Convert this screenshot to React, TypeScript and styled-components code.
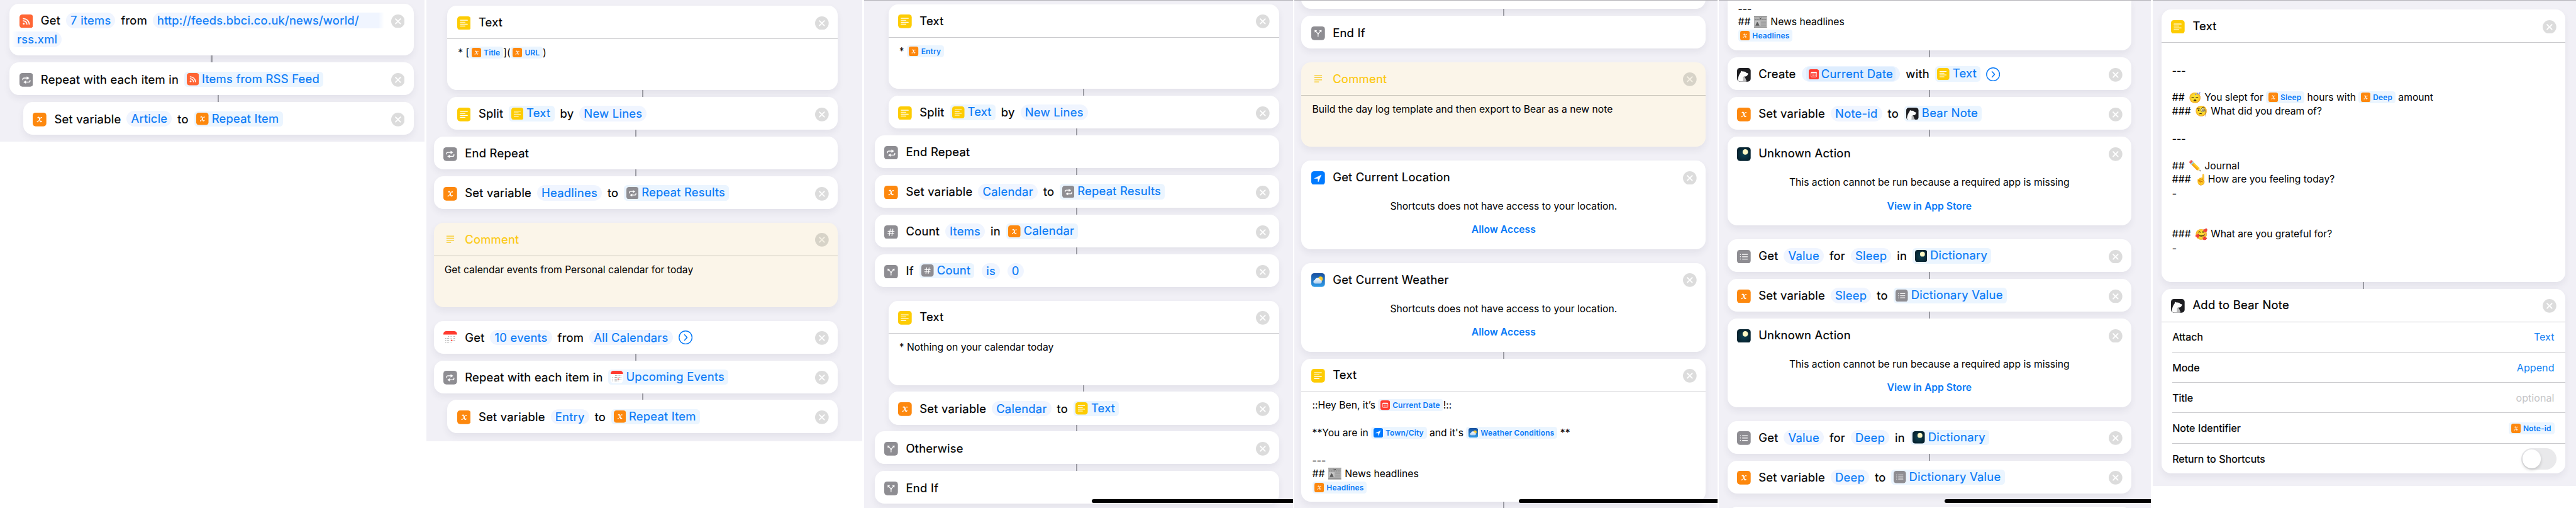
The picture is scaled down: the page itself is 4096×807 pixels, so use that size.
import React from "react";
import styled, { createGlobalStyle, css } from "styled-components";

/* Design units are full-size pixels; the page is drawn at this scale. */
const SCALE = 4096 / 7546;
const u = (n: number) => `${+(n * SCALE).toFixed(3)}px`;

const blue = "#087af7";

const GlobalStyle = createGlobalStyle`
  * { box-sizing: border-box; }
  html, body { margin: 0; padding: 0; background: #fff; }
  body {
    overflow: hidden;
    font-family: Inter, "Liberation Sans", sans-serif;
    font-feature-settings: "calt" 0;
    color: #000;
  }
`;

const Board = styled.main`
  display: flex;
  align-items: flex-start;
  gap: ${u(5)};
  width: 4096px;
  height: 807px;
  overflow: hidden;
  background: #fff;
`;

const Panel = styled.section<{ $w: number; $h?: number; $left: number; $top: number; $line?: boolean }>`
  position: relative;
  flex: none;
  width: ${(p) => u(p.$w)};
  height: ${(p) => (p.$h ? u(p.$h) : "807px")};
  padding: ${(p) => u(Math.max(p.$top, 0))} 0 0 ${(p) => u(p.$left)};
  overflow: hidden;
  background: #f1f0f6;

  & > :first-child {
    margin-top: ${(p) => u(Math.min(p.$top, 0))};
  }

  ${(p) =>
    p.$line &&
    css`
      &::before {
        content: "";
        position: absolute;
        inset: 0 0 auto 0;
        height: 1px;
        z-index: 2;
        background: #b4b3b8;
      }
    `}
`;

const HomeBar = styled.div<{ $left: number }>`
  position: absolute;
  left: ${(p) => u(p.$left)};
  right: 0;
  bottom: ${u(15)};
  height: ${u(11)};
  border-radius: ${u(6)} 0 0 ${u(6)};
  background: #000;
`;

const Card = styled.article<{ $indent?: boolean; $h?: number; $note?: boolean; $tail?: boolean }>`
  width: ${(p) => u(p.$indent ? 1144 : 1184)};
  height: ${(p) => u(p.$h ?? 96)};
  margin-left: ${(p) => (p.$indent ? u(40) : 0)};
  border-radius: ${(p) => (p.$tail ? `0 0 ${u(28)} ${u(28)}` : u(28))};
  background: ${(p) => (p.$note ? "#fbf5e9" : "#fff")};
  box-shadow: 0 ${u(10)} ${u(20)} rgba(40, 40, 70, 0.065);
`;

const Link = styled.div<{ $indent?: boolean }>`
  position: relative;
  width: ${u(4)};
  height: ${u(20)};
  margin-left: ${(p) => u(p.$indent ? 610 : 590)};
  background: #9b9ba3;
`;

const Space = styled.div`
  height: ${u(40)};
`;

const Header = styled.header<{ $ruled?: boolean; $note?: boolean }>`
  display: flex;
  align-items: center;
  height: ${(p) => u(p.$ruled ? 97.5 : 96)};
  padding: 0 ${u(27)} ${(p) => (p.$ruled ? u(1.5) : 0)} ${u(28.5)};
  border-bottom: ${(p) => (p.$ruled ? `1px solid ${p.$note ? "#c9c5ba" : "#cacacd"}` : "none")};
`;

const Tile = styled.svg<{ $size?: number; $drop?: number }>`
  flex: none;
  display: block;
  width: ${(p) => u(p.$size ?? 40)};
  height: ${(p) => u(p.$size ?? 40)};
  margin-top: ${(p) => u(p.$drop ?? 0)};
`;

const Phrase = styled.div<{ $tone?: string }>`
  flex: 1;
  display: flex;
  align-items: center;
  gap: ${u(16.5)};
  margin-left: ${u(23)};
  padding-top: ${u(1.8)};
  font-size: ${u(34)};
  letter-spacing: ${u(0.45)};
  font-weight: 400;
  line-height: ${u(45)};
  white-space: nowrap;
  color: ${(p) => p.$tone ?? "#000"};
  -webkit-text-stroke: 0.2px currentColor;
`;

const Pill = styled.span<{ $after?: boolean }>`
  height: ${u(45.5)};
  padding: 0 ${u(13)};
  margin-left: ${(p) => (p.$after ? u(5) : 0)};
  border-radius: ${u(23)};
  background: #f0f5ff;
  color: ${blue};
`;

const Token = styled.span`
  display: flex;
  align-items: center;
  gap: ${u(9)};
  height: ${u(45)};
  padding: 0 ${u(11.5)} 0 ${u(6.5)};
  border-radius: ${u(10)};
  background: #ebf5ff;
  color: ${blue};
  line-height: ${u(43)};
`;

const TokenText = styled.span`
  margin-top: ${u(-2)};
`;

const DatePill = styled.span`
  display: flex;
  align-items: center;
  height: ${u(46)};
  padding: 0 ${u(13)};
  border-radius: ${u(23)};
  background: #ecf4ff;
`;

const DateToken = styled(Token)`
  height: ${u(43)};
  gap: ${u(6.5)};
  padding: 0 ${u(8)};
  background: #deedfe;
  line-height: ${u(41)};
`;

const Body = styled.div<{ $tail?: boolean }>`
  padding: ${(p) => u(p.$tail ? 4.5 : 19.5)} ${u(31.5)} 0;
  font-size: ${u(28.9)};
  white-space: pre;
`;

const Line = styled.div`
  display: flex;
  align-items: center;
  height: ${u(40)};
`;

const Dashes = styled(Line)`
  padding-top: ${u(4)};
  -webkit-text-stroke: 0.2px currentColor;
`;

const Mini = styled.span`
  display: flex;
  align-items: center;
  gap: ${u(7.5)};
  height: ${u(35)};
  padding: 0 ${u(9)} 0 ${u(6.5)};
  border-radius: ${u(8)};
  background: #ebf5ff;
  color: ${blue};
  font-size: ${u(22)};
  font-weight: 600;
  letter-spacing: ${u(0.3)};
`;

const Emoji = styled.span`
  width: ${u(39)};
  margin-left: ${u(3)};
  font-size: ${u(30)};
  line-height: 1;
  text-align: center;
`;

const Paper = styled.svg`
  flex: none;
  width: ${u(38)};
  height: ${u(34)};
  margin: 0 ${u(1.5)} 0 ${u(3)};
`;

const Alert = styled.div`
  display: flex;
  flex-direction: column;
  align-items: center;
  gap: ${u(29)};
  padding-top: ${u(18.5)};
  font-size: ${u(28.9)};
  line-height: ${u(40)};
`;

const AlertLink = styled.a`
  color: ${blue};
  font-weight: 600;
`;

const WrapArea = styled.div`
  display: flex;
  flex-direction: column;
  font-size: ${u(34)};
  letter-spacing: ${u(0.45)};
  -webkit-text-stroke: 0.2px currentColor;
`;

const UrlStart = styled(Pill)`
  width: ${u(678)};
  border-radius: ${u(23)} 0 0 ${u(23)};
  background: linear-gradient(90deg, #f0f5ff 97.5%, #fff);
`;

const UrlEnd = styled(Pill)`
  align-self: flex-start;
  margin: ${u(-14.4)} 0 0 ${u(7)};
  padding: 0 ${u(12)} 0 ${u(15)};
  border-radius: 0 ${u(23)} ${u(23)} 0;
  background: linear-gradient(90deg, #fff, #f0f5ff 14%);
  line-height: ${u(45)};
`;

const Field = styled.div<{ $last?: boolean }>`
  display: flex;
  align-items: center;
  justify-content: space-between;
  height: ${u(89)};
  margin-left: ${u(32)};
  padding-right: ${(p) => u(p.$last ? 27.5 : 33)};
  border-bottom: ${(p) => (p.$last ? "none" : "1px solid #cacacd")};
  font-size: ${u(29.6)};
  letter-spacing: ${u(0.1)};
`;

const Label = styled.span`
  -webkit-text-stroke: 0.25px currentColor;
`;

const Value = styled.span<{ $empty?: boolean }>`
  color: ${(p) => (p.$empty ? "#c5c5c7" : "#1583f3")};
`;

const Toggle = styled.span`
  width: ${u(103)};
  height: ${u(62)};
  padding: ${u(4)};
  border-radius: ${u(31)};
  background: #e9e9eb;

  &::after {
    content: "";
    display: block;
    width: ${u(54)};
    height: ${u(54)};
    border-radius: 50%;
    background: #fff;
    box-shadow: 0 ${u(4)} ${u(10)} rgba(0, 0, 0, 0.18);
  }
`;

type IconName =
  | "text" | "repeat" | "var" | "rss" | "hash" | "fork" | "calendar"
  | "date" | "location" | "weather" | "bear" | "moon" | "list" | "comment";

const fills: Partial<Record<IconName, string>> = {
  text: "#fdcc03", repeat: "#8e8d92", var: "#fd880e", rss: "#ff6534", hash: "#8e8d92",
  fork: "#8e8d92", date: "#fe3b30", location: "#007aff", list: "#8e8d92", bear: "#1e1e22",
};

const calendarDots = [
  [15.5, 20, 24.5, 29, 33],
  [7, 11.3, 15.7, 20, 24.5, 29, 33],
  [7, 11.3, 15.7, 20, 24.5, 29, 33],
  [7, 11.3, 15.7, 20, 24.5],
];

const glyphs: Record<IconName, React.ReactNode> = {
  text: (
    <path d="M9 11.4H30M9 17H23M9 22.7H30M9 28.5H23" stroke="#fff" strokeWidth="2.2" strokeLinecap="round" />
  ),
  comment: <path d="M9 9.5H31.5M9 15.6H31.5M9 21.8H31.5M9 28H22.5" stroke="#f8c921" strokeWidth="2.4" />,
  repeat: (
    <g>
      <path d="M9.5 20v-1.2a4 4 0 0 1 4-4H22M31 21v1.5a4 4 0 0 1-4 4H18" fill="none" stroke="#fff" strokeWidth="2.5" strokeLinecap="round" />
      <path d="M21.5 10.6L28.5 14.9 21.5 19.2ZM18.8 22.2L11.8 26.5 18.8 30.8Z" fill="#fff" stroke="#fff" strokeWidth="0.6" strokeLinejoin="round" />
    </g>
  ),
  var: (
    <g fill="none" stroke="#fff" strokeLinecap="round">
      <path d="M15 14.4C17 12.7 18.6 13.2 19.3 16L21.4 24.2C22.2 27.3 24 27.4 26 25" strokeWidth="3" />
      <path d="M26.4 14.2C23.8 13 22.2 16 20.2 19.5C17.8 23.8 16 27.8 13.4 26.6" strokeWidth="1.9" />
      <path d="M26.4 14.3v.1M13.7 26.4v.1" strokeWidth="3" />
    </g>
  ),
  rss: (
    <g fill="none" stroke="#fff" strokeWidth="3.2">
      <path d="M10 12.2A17.5 17.5 0 0 1 28.6 29.6" />
      <path d="M10 18.8A11 11 0 0 1 22 29.6" />
      <circle cx="12.4" cy="27" r="2.7" fill="#fff" stroke="none" />
    </g>
  ),
  hash: (
    <path d="M17.6 11L14.8 30M25.3 11L22.5 30M11 17.2H29M10.5 24H28.5" stroke="#fff" strokeWidth="2.3" strokeLinecap="round" />
  ),
  fork: (
    <g>
      <path d="M20 29.5V24C20 20.5 18.5 19.5 12.5 13.5M20 24C20 20.5 21.5 19.5 27.5 13.5" fill="none" stroke="#fff" strokeWidth="2.3" strokeLinecap="round" />
      <path d="M9.6 10.8L17 11.6 10.4 18.2ZM30.4 10.8L23 11.6 29.6 18.2Z" fill="#fff" />
    </g>
  ),
  calendar: (
    <g>
      <rect width="40" height="40" rx="8.5" fill="#fff" />
      <path d="M0 10V8.5A8.5 8.5 0 0 1 8.5 0H31.5A8.5 8.5 0 0 1 40 8.5V10Z" fill="#ff3b30" />
      {calendarDots.map((row, r) =>
        row.map((x) => (
          <circle key={`${r}-${x}`} cx={x} cy={16 + r * 5.6} r={r === 2 && x === 24.5 ? 2.2 : 0.9} fill={r === 2 && x === 24.5 ? "#ff3b30" : "#222"} />
        )),
      )}
    </g>
  ),
  date: (
    <g>
      <rect x="9" y="11" width="22" height="19" rx="2.5" fill="none" stroke="#fff" strokeWidth="1.8" />
      <path d="M9 11.5h22v4H9z" fill="#fff" />
      {[19, 22.5, 26].map((y) => (
        <path key={y} d={`M12.7 ${y}H28`} stroke="#fff" strokeWidth="1.9" strokeDasharray="1.9 2.3" />
      ))}
    </g>
  ),
  location: <path d="M29.3 10.9L9.3 21.2H19.2Q19.6 21.2 19.6 21.6L20.3 31.3Z" fill="#fff" stroke="#fff" strokeWidth="1" strokeLinejoin="round" />,
  weather: (
    <g>
      <defs>
        <linearGradient id="sky" x1="0" y1="0" x2="0" y2="1">
          <stop offset="0" stopColor="#174f9f" />
          <stop offset="1" stopColor="#2f9ce8" />
        </linearGradient>
        <linearGradient id="cloud" x1="0" y1="0" x2="0" y2="1">
          <stop offset="0" stopColor="#ffffff" />
          <stop offset="1" stopColor="#a9cdf0" />
        </linearGradient>
      </defs>
      <rect width="40" height="40" rx="8.5" fill="url(#sky)" />
      <circle cx="27" cy="16.5" r="6.8" fill="#fccb2c" />
      <path d="M11.5 30.5a5.5 5.5 0 0 1-.8-10.9 7.8 7.8 0 0 1 15-.6 5.9 5.9 0 0 1 1.3 11.5Z" fill="url(#cloud)" />
    </g>
  ),
  bear: (
    <g>
      <path d="M1.5 40C2.5 28 6 18.5 11 12.5L12 9Q13.5 7.2 15.8 10.2Q21 9.3 25 11.6Q26.5 14.2 29 14.8L32.7 15.8Q32.8 18 31 20.5Q29 24.5 25 24.7L21 25Q25 30.5 28.2 40Z" fill="#fbfbfb" />
      <path d="M17.2 27.5Q18.8 25 21 25Q25 30.5 28.2 40H16.5Q18.5 33 17.2 27.5Z" fill="#b9b9ba" />
    </g>
  ),
  moon: (
    <g>
      <defs>
        <radialGradient id="night">
          <stop offset="0" stopColor="#0d4253" />
          <stop offset="1" stopColor="#062330" />
        </radialGradient>
      </defs>
      <rect width="40" height="40" rx="8.5" fill="url(#night)" />
      <circle cx="24.2" cy="13.7" r="8" fill="#fcf7c4" />
    </g>
  ),
  list: (
    <g stroke="#fff" strokeWidth="2.2" strokeLinecap="round">
      <path d="M15.8 13.3H30.5M15.8 20H30.5M15.8 26.8H30.5" />
      <path d="M10 13.3h.1M10 20h.1M10 26.8h.1" strokeWidth="2.8" />
    </g>
  ),
};

function Icon({ name, size, drop }: { name: IconName; size?: number; drop?: number }) {
  return (
    <Tile viewBox="0 0 40 40" $size={size} $drop={drop}>
      {fills[name] && <rect width="40" height="40" rx="8.5" fill={fills[name]} />}
      {name === "bear" ? <g clipPath="inset(0 round 8.5px)">{glyphs.bear}</g> : glyphs[name]}
    </Tile>
  );
}

function Close({ note }: { note?: boolean }) {
  return (
    <Tile viewBox="0 0 40 40" $drop={6}>
      <circle cx="20" cy="20" r="20" fill={note ? "#d7d3c8" : "#dcdcdc"} />
      <path d="M13 13L27 27M27 13L13 27" stroke={note ? "#f5f0e4" : "#fff"} strokeWidth="3.4" strokeLinecap="round" />
    </Tile>
  );
}

function More() {
  return (
    <Tile viewBox="0 0 41 41" $size={41}>
      <circle cx="20.5" cy="20.5" r="19" fill="none" stroke={blue} strokeWidth="2.7" />
      <path d="M17.5 12.5L25 20.5 17.5 28.5" fill="none" stroke={blue} strokeWidth="2.7" strokeLinecap="round" strokeLinejoin="round" />
    </Tile>
  );
}

function Newspaper() {
  return (
    <Paper viewBox="0 0 38 34">
      <rect width="38" height="34" fill="#b4b4b4" />
      <path d="M0 .8H38M0 33H38" stroke="#6e6e6e" strokeWidth="1.6" />
      <path d="M2 4.5H36" stroke="#8a8a8a" strokeWidth="1.4" strokeDasharray="3 1" />
      <path d="M16 3.5L19 7.5 22 3.5" fill="none" stroke="#3a3a3a" strokeWidth="1.6" />
      <path d="M2 9.5H36" stroke="#777" strokeWidth="2.2" strokeDasharray="4 1" />
      <rect x="2.5" y="13" width="15" height="14" fill="#c6c6c6" />
      <path d="M4 27L9 15.5 12 19 16 27Z" fill="#5c5c5c" />
      <path d="M20.5 14.5H35.5M20.5 17.5H35.5M20.5 20.5H35.5M20.5 23.5H35.5M20.5 26.5H35.5M2.5 29.8H35.5" stroke="#949494" strokeWidth="1.2" />
    </Paper>
  );
}

function Var({ icon, children }: { icon: IconName; children: string }) {
  return (
    <Token>
      <Icon name={icon} size={36} />
      <TokenText>{children}</TokenText>
    </Token>
  );
}

function Chip({ icon, children }: { icon: IconName; children: string }) {
  return (
    <Mini>
      <Icon name={icon} size={28} />
      {children}
    </Mini>
  );
}

type HeadProps = { icon: IconName; children?: React.ReactNode; ruled?: boolean; note?: boolean; fixed?: boolean };

function Head({ icon, children, ruled, note, fixed }: HeadProps) {
  return (
    <Header $ruled={ruled} $note={note}>
      <Icon name={icon} drop={6} />
      <Phrase $tone={note ? "#fbc90e" : undefined}>{children}</Phrase>
      {!fixed && <Close note={note} />}
    </Header>
  );
}

type ActionProps = { icon: IconName; children?: React.ReactNode; indent?: boolean; fixed?: boolean };

function Action({ icon, children, indent, fixed }: ActionProps) {
  return (
    <Card $indent={indent}>
      <Head icon={icon} fixed={fixed}>{children}</Head>
    </Card>
  );
}

function TextCard({ children, indent, h = 247 }: { children: React.ReactNode; indent?: boolean; h?: number }) {
  return (
    <Card $indent={indent} $h={h}>
      <Head icon="text" ruled>Text</Head>
      <Body>{children}</Body>
    </Card>
  );
}

function NoteCard({ children }: { children: string }) {
  return (
    <Card $note $h={247}>
      <Head icon="comment" ruled note>Comment</Head>
      <Body><Line>{children}</Line></Body>
    </Card>
  );
}

function AlertCard({ icon, title, message, link }: { icon: IconName; title: string; message: string; link: string }) {
  return (
    <Card $h={260}>
      <Head icon={icon}>{title}</Head>
      <Alert>
        <span>{message}</span>
        <AlertLink>{link}</AlertLink>
      </Alert>
    </Card>
  );
}

function SetVariable({ name, icon, value, indent }: { name: string; icon: IconName; value: string; indent?: boolean }) {
  return (
    <Action icon="var" indent={indent}>
      <span>Set variable</span>
      <Pill>{name}</Pill>
      <span>to</span>
      <Var icon={icon}>{value}</Var>
    </Action>
  );
}

function Split() {
  return (
    <Action icon="text" indent>
      <span>Split</span>
      <Var icon="text">Text</Var>
      <span>by</span>
      <Pill>New Lines</Pill>
    </Action>
  );
}

function GetValue({ name }: { name: string }) {
  return (
    <Action icon="list">
      <span>Get</span>
      <Pill>Value</Pill>
      <span>for</span>
      <Pill>{name}</Pill>
      <span>in</span>
      <Var icon="moon">Dictionary</Var>
    </Action>
  );
}

function UnknownAction() {
  return (
    <AlertCard
      icon="moon"
      title="Unknown Action"
      message="This action cannot be run because a required app is missing"
      link="View in App Store"
    />
  );
}

function NewsLines() {
  return (
    <>
      <Dashes>---</Dashes>
      <Line>{"## "}<Newspaper />{" News headlines"}</Line>
      <Line><Chip icon="var">Headlines</Chip></Line>
    </>
  );
}

export default function App() {
  return (
    <>
      <GlobalStyle />
      <Board>
        <Panel $w={1244} $h={415} $left={28} $top={11}>
          <Card $h={152}>
            <WrapArea>
              <Head icon="rss">
                <span>Get</span>
                <Pill>7 items</Pill>
                <span>from</span>
                <UrlStart>http://feeds.bbci.co.uk/news/world/</UrlStart>
              </Head>
              <UrlEnd>rss.xml</UrlEnd>
            </WrapArea>
          </Card>
          <Link />
          <Action icon="repeat">
            <span>Repeat with each item in</span>
            <Var icon="rss">Items from RSS Feed</Var>
          </Action>
          <Link $indent />
          <SetVariable indent name="Article" icon="var" value="Repeat Item" />
        </Panel>

        <Panel $w={1277} $h={1292} $left={21.4} $top={17}>
          <TextCard indent>
            <Line>{"* ["}<Chip icon="var">Title</Chip>{"]("}<Chip icon="var">URL</Chip>)</Line>
          </TextCard>
          <Link $indent />
          <Split />
          <Link />
          <Action icon="repeat" fixed>End Repeat</Action>
          <Link />
          <SetVariable name="Headlines" icon="repeat" value="Repeat Results" />
          <Space />
          <NoteCard>Get calendar events from Personal calendar for today</NoteCard>
          <Space />
          <Action icon="calendar">
            <span>Get</span>
            <Pill>10 events</Pill>
            <span>from</span>
            <Pill>All Calendars</Pill>
            <More />
          </Action>
          <Link />
          <Action icon="repeat">
            <span>Repeat with each item in</span>
            <Var icon="calendar">Upcoming Events</Var>
          </Action>
          <Link $indent />
          <SetVariable indent name="Entry" icon="var" value="Repeat Item" />
        </Panel>

        <Panel $w={1256} $left={31.5} $top={13} $line>
          <TextCard indent>
            <Line>{"* "}<Chip icon="var">Entry</Chip></Line>
          </TextCard>
          <Link $indent />
          <Split />
          <Link />
          <Action icon="repeat" fixed>End Repeat</Action>
          <Link />
          <SetVariable name="Calendar" icon="repeat" value="Repeat Results" />
          <Link />
          <Action icon="hash">
            <span>Count</span>
            <Pill>Items</Pill>
            <span>in</span>
            <Var icon="var">Calendar</Var>
          </Action>
          <Link />
          <Action icon="fork">
            <span>If</span>
            <Var icon="hash">Count</Var>
            <Pill $after>is</Pill>
            <Pill $after>0</Pill>
          </Action>
          <Space />
          <TextCard indent>
            <Line>* Nothing on your calendar today</Line>
          </TextCard>
          <Link $indent />
          <SetVariable indent name="Calendar" icon="text" value="Text" />
          <Link />
          <Action icon="fork">Otherwise</Action>
          <Link />
          <Action icon="fork" fixed>End If</Action>
          <HomeBar $left={668} />
        </Panel>

        <Panel $w={1239} $left={20.7} $top={-69.5} $line>
          <Action icon="fork" />
          <Link />
          <Action icon="fork" fixed>End If</Action>
          <Space />
          <NoteCard>Build the day log template and then export to Bear as a new note</NoteCard>
          <Space />
          <AlertCard icon="location" title="Get Current Location" message="Shortcuts does not have access to your location." link="Allow Access" />
          <Space />
          <AlertCard icon="weather" title="Get Current Weather" message="Shortcuts does not have access to your location." link="Allow Access" />
          <Link />
          <TextCard h={419}>
            <Line>{"::Hey Ben, it’s "}<Chip icon="date">Current Date</Chip>!::</Line>
            <Line />
            <Line>{"**You are in "}<Chip icon="location">Town/City</Chip>{" and it's "}<Chip icon="weather">Weather Conditions</Chip>{" **"}</Line>
            <Line />
            <NewsLines />
          </TextCard>
          <Link />
          <HomeBar $left={658} />
        </Panel>

        <Panel $w={1265} $left={24} $top={0} $line>
          <Card $tail $h={148}>
            <Body $tail><NewsLines /></Body>
          </Card>
          <Link />
          <Action icon="bear">
            <span>Create</span>
            <DatePill>
              <DateToken>
                <Icon name="date" size={30} />
                <TokenText>Current Date</TokenText>
              </DateToken>
            </DatePill>
            <span>with</span>
            <Var icon="text">Text</Var>
            <More />
          </Action>
          <Link />
          <SetVariable name="Note-id" icon="bear" value="Bear Note" />
          <Link />
          <UnknownAction />
          <Space />
          <GetValue name="Sleep" />
          <Link />
          <SetVariable name="Sleep" icon="list" value="Dictionary Value" />
          <Link />
          <UnknownAction />
          <Space />
          <GetValue name="Deep" />
          <Link />
          <SetVariable name="Deep" icon="list" value="Dictionary Value" />
          <Space />
          <Card />
          <HomeBar $left={661} />
        </Panel>

        <Panel $w={1240} $h={1422.5} $left={25.7} $top={28} $line>
          <TextCard h={797}>
            <Line />
            <Dashes>---</Dashes>
            <Line />
            <Line>{"## "}<Emoji>😴</Emoji>{" You slept for "}<Chip icon="var">Sleep</Chip>{" hours with "}<Chip icon="var">Deep</Chip>{" amount"}</Line>
            <Line>{"### "}<Emoji>🧐</Emoji>{" What did you dream of?"}</Line>
            <Line />
            <Dashes>---</Dashes>
            <Line />
            <Line>{"## "}<Emoji>✏️</Emoji>{" Journal"}</Line>
            <Line>{"### "}<Emoji>☝️</Emoji>How are you feeling today?</Line>
            <Dashes>-</Dashes>
            <Line />
            <Line />
            <Line>{"### "}<Emoji>🥰</Emoji>{" What are you grateful for?"}</Line>
            <Dashes>-</Dashes>
          </TextCard>
          <Link />
          <Card $h={541}>
            <Head icon="bear" ruled>Add to Bear Note</Head>
            <Field><Label>Attach</Label><Value>Text</Value></Field>
            <Field><Label>Mode</Label><Value>Append</Value></Field>
            <Field><Label>Title</Label><Value $empty>optional</Value></Field>
            <Field><Label>Note Identifier</Label><Chip icon="var">Note-id</Chip></Field>
            <Field $last><Label>Return to Shortcuts</Label><Toggle /></Field>
          </Card>
        </Panel>
      </Board>
    </>
  );
}
